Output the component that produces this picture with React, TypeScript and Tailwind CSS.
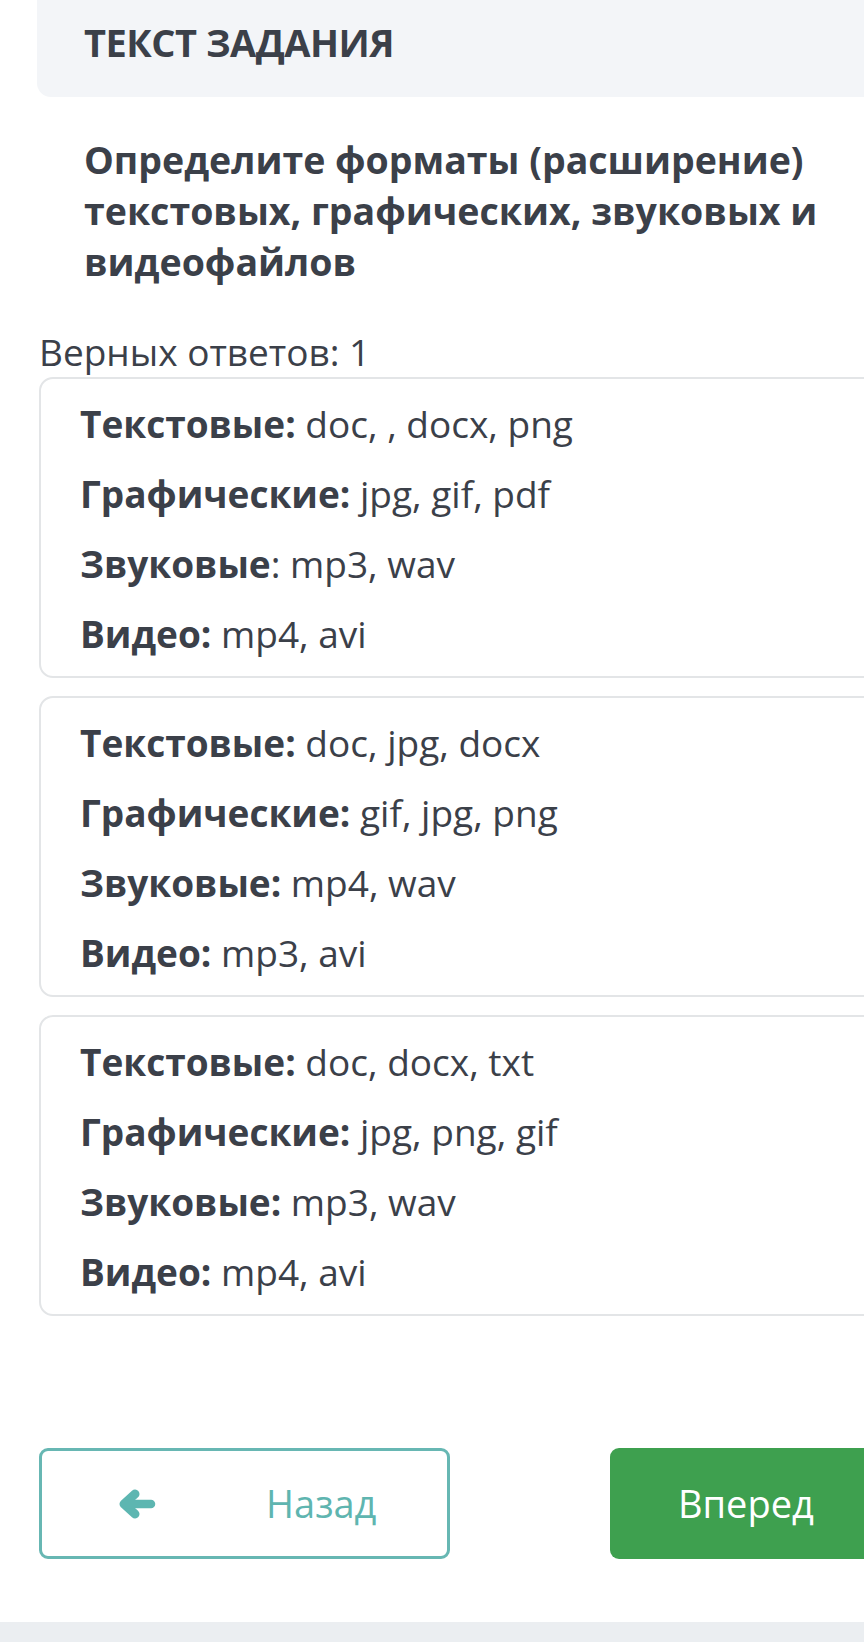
import React from "react";

const cards = [
  [
    ["Текстовые:", " doc, , docx, png"],
    ["Графические:", " jpg, gif, pdf"],
    ["Звуковые", ": mp3, wav"],
    ["Видео:", " mp4, avi"],
  ],
  [
    ["Текстовые:", " doc, jpg, docx"],
    ["Графические:", " gif, jpg, png"],
    ["Звуковые:", " mp4, wav"],
    ["Видео:", " mp3, avi"],
  ],
  [
    ["Текстовые:", " doc, docx, txt"],
    ["Графические:", " jpg, png, gif"],
    ["Звуковые:", " mp3, wav"],
    ["Видео:", " mp4, avi"],
  ],
];

function ArrowLeft() {
  return (
    <svg width="38" height="32" viewBox="0 0 38 32" className="ml-[76px] shrink-0">
      <polyline
        points="17,6 6,16 17,26"
        fill="none"
        stroke="#5db6b1"
        strokeWidth="9"
        strokeLinecap="round"
        strokeLinejoin="round"
      />
      <line x1="8" y1="16" x2="33" y2="16" stroke="#5db6b1" strokeWidth="8.5" strokeLinecap="round" />
    </svg>
  );
}

export default function App() {
  return (
    <div
      className="w-[864px] h-[1642px] overflow-hidden bg-white text-[#3b4049] flex flex-col"
      style={{ fontFamily: '"Open Sans", "Noto Sans", sans-serif' }}
    >
      <div className="w-[1060px] pl-[37px] flex-1">
        <div className="h-[97px] bg-[#f3f5f8] rounded-bl-[14px] flex items-center pl-[47px] pb-[12px]">
          <span className="text-[38px] font-bold tracking-[-0.5px]">ТЕКСТ ЗАДАНИЯ</span>
        </div>
        <div className="pl-[47px] pt-[37px] text-[37.5px] leading-[51px] font-bold w-[860px]">
          Определите форматы (расширение)
          <br />
          текстовых, графических, звуковых и
          <br />
          видеофайлов
        </div>
        <div className="mt-[45px] pl-[2px] text-[37px] leading-[40px]">Верных ответов: 1</div>
        <div className="flex flex-col gap-[18px] mt-[5px]">
          {cards.map((c, i) => (
            <div
              key={i}
              className="ml-[2px] border-2 border-[#e3e5e7] rounded-[14px] pl-[39px] pt-[10px] pb-[7px]"
            >
              {c.map(([b, r], j) => (
                <div key={j} className="h-[70px] flex items-center text-[37px]">
                  <span className="font-bold">{b}</span>
                  <span className="whitespace-pre">{r}</span>
                </div>
              ))}
            </div>
          ))}
        </div>
        <div className="flex gap-[160px] mt-[132px] ml-[2px]">
          <button className="w-[411px] h-[111px] border-[3px] border-[#67b7b3] rounded-[9px] flex items-center text-[#5fb5b0]">
            <ArrowLeft />
            <span className="ml-[110px] text-[38px]">Назад</span>
          </button>
          <button className="w-[411px] h-[111px] bg-[#3ea04f] rounded-[9px] text-white text-[38px] flex items-center pl-[68px]">
            Вперед
          </button>
        </div>
      </div>
      <div className="h-[20px] bg-[#ebeef1]" />
    </div>
  );
}
